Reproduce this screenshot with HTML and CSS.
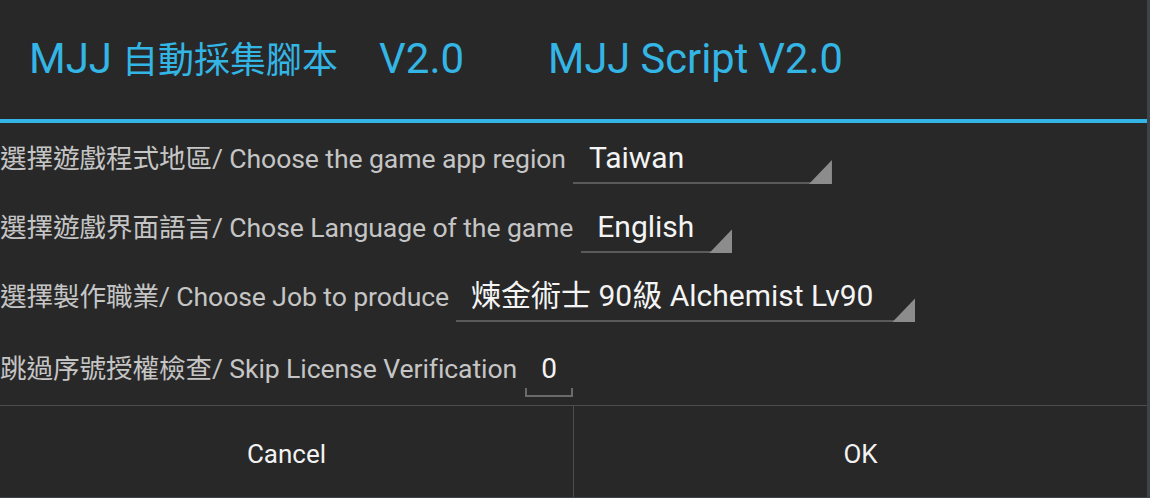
FILE: index.html
```html
<!DOCTYPE html>
<html lang="zh-Hant">
<head>
<meta charset="utf-8">
<title>MJJ Script V2.0</title>
<link rel="stylesheet" href="styles.css">
</head>
<body>
<div class="dialog">
  <header class="header">
    <span class="t-lat">MJJ</span><span class="t-cjk">自動採集腳本</span><span class="t-ver">V2.0</span>
    <span class="t-en">MJJ Script V2.0</span>
  </header>
  <div class="rule"></div>
  <div class="form">
    <div class="row">
      <span class="label">選擇遊戲程式地區/ Choose the game app region</span>
      <div class="spinner spinner-region"><span class="value">Taiwan</span></div>
    </div>
    <div class="row">
      <span class="label">選擇遊戲界面語言/ Chose Language of the game</span>
      <div class="spinner spinner-lang"><span class="value">English</span></div>
    </div>
    <div class="row">
      <span class="label">選擇製作職業/ Choose Job to produce</span>
      <div class="spinner spinner-job"><span class="value">煉金術士 90級 Alchemist Lv90</span></div>
    </div>
    <div class="row row-last">
      <span class="label">跳過序號授權檢查/ Skip License Verification</span>
      <div class="edit">0</div>
    </div>
  </div>
  <div class="actions">
    <button class="btn btn-cancel">Cancel</button>
    <button class="btn">OK</button>
  </div>
</div>
</body>
</html>
```

FILE: styles.css
```css
* { box-sizing: border-box; }
html, body { margin: 0; padding: 0; }
body {
  width: 1150px;
  height: 498px;
  overflow: hidden;
  background: #3c434b;
  font-family: Roboto, "Noto Sans CJK TC", sans-serif;
}
.dialog {
  width: 1147px;
  height: 497px;
  background: #282828;
  display: flex;
  flex-direction: column;
}
.header {
  height: 119px;
  display: flex;
  align-items: baseline;
  padding: 0 0 0 29px;
  line-height: 118px;
  color: #33b5e5;
  white-space: nowrap;
}
.t-lat, .t-ver, .t-en { font-size: 42px; }
.t-en { font-size: 41.6px; }
.t-cjk { font-size: 36px; margin-left: 10px; }
.t-ver { margin-left: 41px; }
.t-en { margin-left: 84px; }
.rule { height: 4px; background: #33b5e5; flex: none; }
.form {
  flex: 1;
  padding-top: 17px;
  display: flex;
  flex-direction: column;
  gap: 25px;
}
.row { display: flex; align-items: baseline; }
.row-last { margin-top: 4px; }
.label {
  font-size: 26.6px;
  letter-spacing: -0.1px;
  line-height: 36px;
  color: #c5c5c5;
  white-space: nowrap;
}
.spinner {
  position: relative;
  margin-left: 7px;
  padding: 0 38px 6px 16px;
  border-bottom: 2px solid #5a5a5a;
  font-size: 30px;
  line-height: 36px;
  color: #f4f4f4;
  white-space: nowrap;
}
.spinner::after {
  content: "";
  position: absolute;
  right: 0;
  bottom: -2px;
  width: 23px;
  height: 24px;
  background: #8c8c8c;
  clip-path: polygon(100% 0, 100% 100%, 0 100%);
}
.spinner-region { width: 259px; }
.spinner-lang { margin-left: 8px; }
.spinner-job { margin-left: 7px; padding-left: 15px; padding-right: 42px; }
.edit {
  position: relative;
  margin-left: 8px;
  width: 48px;
  text-align: center;
  font-size: 28px;
  line-height: 36px;
  padding-bottom: 10px;
  color: #f4f4f4;
}
.edit::after {
  content: "";
  position: absolute;
  left: 0;
  right: 0;
  bottom: 0;
  height: 7px;
  border: 2px solid #6a6a6a;
  border-top: none;
}
.actions {
  height: 92px;
  flex: none;
  display: flex;
  border-top: 1px solid #4d4d4d;
}
.btn {
  flex: 1;
  background: none;
  border: none;
  margin: 0;
  padding: 4px 0 0;
  color: #f2f2f2;
  font-family: Roboto, sans-serif;
  font-size: 26px;
}
.btn-cancel { border-right: 1px solid #4d4d4d; }
```
